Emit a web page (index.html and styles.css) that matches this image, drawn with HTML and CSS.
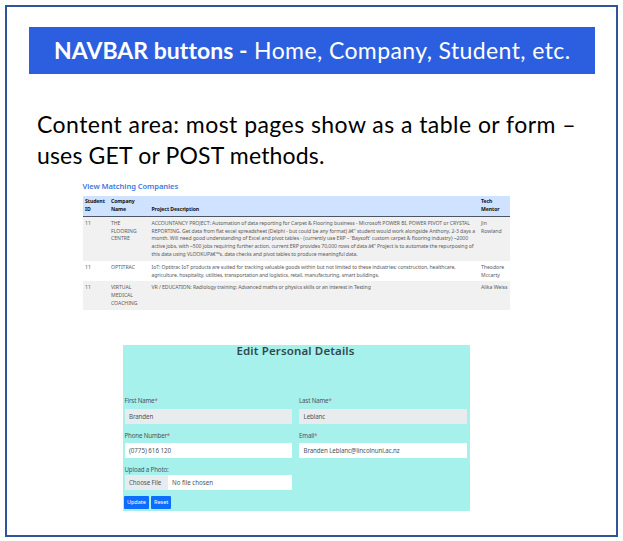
FILE: index.html
```html
<!DOCTYPE html>
<html lang="en">
<head>
<meta charset="utf-8">
<title>Page layout</title>
<link rel="stylesheet" href="styles.css">
</head>
<body>
<main class="frame">
  <header class="navbar"><b>NAVBAR buttons -</b><span class="links">Home, Company, Student, etc.</span></header>
  <div class="intro"><p class="intro-first">Content area: most pages show as a table or form –</p><p class="intro-second">uses GET or POST methods.</p></div>
  <section class="companies">
    <h2>View Matching Companies</h2>
    <div class="row head"><div>Student<br>ID</div><div>Company<br>Name</div><div>Project Description</div><div>Tech<br>Mentor</div></div>
    <div class="row striped flooring"><div>11</div><div>THE<br>FLOORING<br>CENTRE</div><div><span class="t56">ACCOUNTANCY PROJECT: Automation of data reporting for Carpet &amp; Flooring business - Microsoft POWER BI, POWER PIVOT or CRYSTAL</span><br><span class="t71">REPORTING. Get data from flat excel spreadsheet (Delphi - but could be any format) â€“ student would work alongside Anthony, 2-3 days a</span><br><span class="t67">month. Will need good understanding of Excel and pivot tables - (currently use ERP – 'Baysoft' custom carpet &amp; flooring industry) ~2000</span><br><span class="t78">active jobs, with ~500 jobs requiring further action, current ERP provides 70,000 rows of data â€“ Project is to automate the repurposing of</span><br><span class="t95">this data using VLOOKUPâ€™s, data checks and pivot tables to produce meaningful data.</span></div><div>Jin<br>Rowland</div></div>
    <div class="row optitrac"><div>11</div><div>OPTITRAC</div><div><span class="t95">IoT: Optitrac IoT products are suited for tracking valuable goods within but not limited to these industries; construction, healthcare,</span><br><span class="t108">agriculture, hospitality, utilities, transportation and logistics, retail, manufacturing, smart buildings.</span></div><div>Theodore<br>Mccarty</div></div>
    <div class="row striped medical"><div>11</div><div>VIRTUAL<br>MEDICAL<br>COACHING</div><div><span class="t78">VR / EDUCATION: Radiology training: Advanced maths or physics skills or an interest in Testing</span></div><div>Alika Weiss</div></div>
  </section>
  <form class="details">
    <h2>Edit Personal Details</h2>
    <div class="grid">
      <div class="field"><label>First Name<i>*</i></label><div class="input off">Branden</div></div>
      <div class="field"><label>Last Name<i>*</i></label><div class="input off">Leblanc</div></div>
      <div class="field"><label>Phone Number<i>*</i></label><div class="input phone">(0775) 616 120</div></div>
      <div class="field"><label>Email<i>*</i></label><div class="input">Branden Leblanc@lincolnuni.ac.nz</div></div>
      <div class="field file"><label>Upload a Photo:</label><div class="input"><div class="choose">Choose File</div><div class="chosen">No file chosen</div></div></div>
    </div>
    <div class="buttons"><button type="button">Update</button><button type="button">Reset</button></div>
  </form>
</main>
</body>
</html>
```
FILE: styles.css
```css
*{box-sizing:border-box}
body{margin:0;padding:5px 0 0 5px;background:#fff;font-family:"Noto Sans","Open Sans",sans-serif}
h2,p{margin:0}
.frame{width:613px;height:532px;border:2px solid #2f5597;padding:20px 20px 0 21.5px;overflow:hidden}
.navbar{width:566.5px;height:47px;background:#2b5fe0;color:#fff;font:23px/46px Lato,sans-serif;padding-left:25.5px;white-space:nowrap;letter-spacing:.4px}
.navbar b{letter-spacing:.03px}
.links{margin-left:6.5px}
.intro{font:23px/31px Lato,sans-serif;color:#000;padding:35px 0 0 8.5px;white-space:nowrap}
.intro-first{letter-spacing:.45px}
.intro-second{letter-spacing:.17px}

.companies{width:427px;margin:8.5px 0 0 54px;font-size:5.15px;line-height:7.7px;color:#5c5c5c;white-space:nowrap}
.companies h2{height:16px;font-size:7.6px;line-height:12px;font-weight:600;letter-spacing:-.09px;color:#3f7ae0}
.row{display:grid;grid-template-columns:26px 40.5px 329.5px 1fr;padding:3.4px 0 0 2.5px;letter-spacing:-.03px}
.head{height:21px;padding-top:2.6px;align-items:end;padding-bottom:1.7px;background:#cfe2ff;border-bottom:1px solid #4c5563;color:#111;font-weight:700;letter-spacing:-.07px}
.striped{background:#f1f1f1}
.flooring{height:44.5px}
.optitrac{height:20px}
.medical{height:29px}
.t56{letter-spacing:-.056px}
.t67{letter-spacing:-.067px}
.t71{letter-spacing:-.071px}
.t78{letter-spacing:-.078px}
.t95{letter-spacing:-.094px}
.t108{letter-spacing:-.108px}

.details{width:347px;height:166px;margin:35px 0 0 94.5px;background:#a6f1ec;font-size:6.2px;color:#4b5558;white-space:nowrap}
.details h2{height:51.3px;padding-right:2px;font-size:11.5px;line-height:12px;font-weight:600;letter-spacing:.14px;text-align:center;color:#34484c}
.grid{display:grid;grid-template-columns:167.5px 167.5px;column-gap:7px;padding-left:1.5px}
.field{height:34.5px}
.field label{display:block;height:12.5px;line-height:10.5px;letter-spacing:-.17px}
.field i{color:#d0505c;font-style:normal}
.input{height:15px;line-height:15px;padding-left:4.5px;border-radius:1px;background:#fff;letter-spacing:-.1px}
.off{background:#e9ecef}
.phone{letter-spacing:-.02px}
.file label{height:10px}
.file .input{display:flex;padding:0}
.choose{width:43px;padding-left:4.5px;background:#e9ecef;border-radius:1px 0 0 1px}
.chosen{padding-left:4.5px;letter-spacing:-.02px}
.buttons{display:flex;gap:2.5px;margin-top:-3.5px;padding-left:1.2px}
button{width:24.5px;height:13px;margin:0;padding:0;border:0;border-radius:1px;background:#0d6efd;color:#fff;font:5.6px/13px "Noto Sans",sans-serif;letter-spacing:-.05px}
button + button{width:20px}
```
